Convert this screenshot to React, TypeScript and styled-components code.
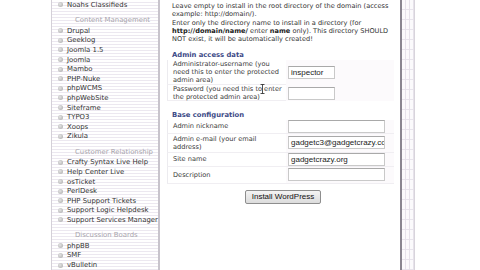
import React from 'react';
import styled, { createGlobalStyle } from 'styled-components';

const GlobalStyle = createGlobalStyle`
  html, body {
    margin: 0;
    padding: 0;
    background: #ffffff;
    overflow: hidden;
  }
  body {
    width: 480px;
    height: 270px;
  }
`;

const Page = styled.div`
  display: flex;
  width: 480px;
  height: 270px;
  background: #ffffff;
  font-family: 'DejaVu Sans', Verdana, sans-serif;
  color: #333333;
  overflow: hidden;
`;

const LeftGap = styled.div`
  width: 51px;
  flex-shrink: 0;
`;

const Sidebar = styled.div`
  width: 106px;
  flex-shrink: 0;
  border-left: 1px solid #d4d0d8;
  border-right: 2px solid #c8c4cc;
  background: repeating-linear-gradient(
    to bottom,
    #ffffff 0px,
    #ffffff 2px,
    #ece8f0 2px,
    #ece8f0 3px
  );
  display: flex;
  flex-direction: column;
`;

const Item = styled.div`
  display: flex;
  align-items: center;
  gap: 4px;
  height: 9.7px;
  padding-left: 6px;
  font-size: 6.9px;
  color: #333333;
  white-space: nowrap;
`;

const Bullet = styled.span`
  width: 5px;
  height: 5px;
  border-radius: 50%;
  background: radial-gradient(circle at 40% 40%, #e4e4e4 0%, #b4b4b4 80%);
  flex-shrink: 0;
`;

const GroupTitle = styled.div`
  padding-top: 6.6px;
  padding-left: 23px;
  height: 9.7px;
  line-height: 9.7px;
  font-size: 6.9px;
  color: #a8a4ac;
  white-space: nowrap;
`;

const Main = styled.div`
  position: relative;
  width: 240px;
  flex-shrink: 0;
  padding: 2px 6px 0 7px;
  box-sizing: border-box;
`;

const Intro = styled.div`
  padding-left: 5px;
  font-size: 6.6px;
  line-height: 8.3px;
  color: #333333;
  b {
    font-weight: bold;
    color: #222222;
  }
`;

const Section = styled.div<{ $top: number }>`
  padding: ${({ $top }) => $top}px 0 0 5px;
  height: 10px;
  line-height: 10px;
  font-size: 6.8px;
  font-weight: bold;
  color: #3c4a86;
`;

const Row = styled.div<{ $h: number }>`
  display: grid;
  grid-template-columns: 118px 1fr;
  height: ${({ $h }) => $h}px;
  box-sizing: border-box;
  border-left: 1px solid #ecebef;
  border-bottom: 1px solid #f0eef2;
`;

const Label = styled.div`
  padding: 0 1px 0 5px;
  display: flex;
  align-items: center;
  font-size: 6.6px;
  line-height: 8.2px;
  color: #3a3a3a;
`;

const Field = styled.div`
  display: flex;
  align-items: center;
  padding-left: 2px;
  background: #fcfafc;
`;

const Input = styled.div<{ $w: number }>`
  width: ${({ $w }) => $w}px;
  height: 13px;
  box-sizing: border-box;
  border: 1px solid #c9c9c9;
  border-top-color: #a9a9a9;
  background: #ffffff;
  font-family: 'Liberation Sans', Arial, sans-serif;
  font-size: 8px;
  line-height: 11px;
  padding-left: 2px;
  color: #222222;
  white-space: nowrap;
  overflow: hidden;
`;

const ButtonRow = styled.div`
  display: flex;
  justify-content: center;
  padding-top: 6px;
  padding-left: 5px;
`;

const Button = styled.div`
  width: 76px;
  height: 14px;
  box-sizing: border-box;
  border: 1px solid #8e8e8e;
  border-radius: 2px;
  background: linear-gradient(to bottom, #f4f4f4, #dcdcdc);
  font-family: 'Liberation Sans', Arial, sans-serif;
  font-size: 8px;
  line-height: 12px;
  text-align: center;
  color: #111111;
`;

const Cursor = styled.svg`
  position: absolute;
  left: 100px;
  top: 84px;
`;

const Rail = styled.div`
  width: 12px;
  flex-shrink: 0;
  border-left: 2px solid #8a8690;
  border-right: 1px solid #d8d4dc;
  background:
    repeating-linear-gradient(to right, transparent 0px, transparent 3px, #e6e2ea 3px, #e6e2ea 4px),
    repeating-linear-gradient(to bottom, #fbfafc 0px, #fbfafc 9px, #e8e4ec 9px, #e8e4ec 10px);
`;

const groups: { title?: string; items: string[] }[] = [
  { items: ['Noahs Classifieds'] },
  {
    title: 'Content Management',
    items: ['Drupal', 'Geeklog', 'Joomla 1.5', 'Joomla', 'Mambo', 'PHP-Nuke', 'phpWCMS', 'phpWebSite', 'Siteframe', 'TYPO3', 'Xoops', 'Zikula'],
  },
  {
    title: 'Customer Relationship',
    items: ['Crafty Syntax Live Help', 'Help Center Live', 'osTicket', 'PerlDesk', 'PHP Support Tickets', 'Support Logic Helpdesk', 'Support Services Manager'],
  },
  { title: 'Discussion Boards', items: ['phpBB', 'SMF', 'vBulletin'] },
];

export default function App() {
  return (
    <Page>
      <GlobalStyle />
      <LeftGap />
      <Sidebar>
        {groups.map((g, gi) => (
          <React.Fragment key={gi}>
            {g.title && <GroupTitle>{g.title}</GroupTitle>}
            {g.items.map((name) => (
              <Item key={name}>
                <Bullet />
                {name}
              </Item>
            ))}
          </React.Fragment>
        ))}
      </Sidebar>
      <Main>
        <Intro>
          Leave empty to install in the root directory of the domain (access example: http://domain/).
          <br />
          Enter only the directory name to install in a directory (for <b>http://domain/name/</b> enter <b>name</b>{' '}
          only). This directory SHOULD NOT exist, it will be automatically created!
        </Intro>
        <Section $top={6.5}>Admin access data</Section>
        <Row $h={25}>
          <Label>Administrator-username (you need this to enter the protected admin area)</Label>
          <Field>
            <Input $w={47}>inspector</Input>
          </Field>
        </Row>
        <Row $h={16}>
          <Label>Password (you need this to enter the protected admin area)</Label>
          <Field>
            <Input $w={47} />
          </Field>
        </Row>
        <Section $top={9}>Base configuration</Section>
        <Row $h={14}>
          <Label>Admin nickname</Label>
          <Field>
            <Input $w={97} />
          </Field>
        </Row>
        <Row $h={19}>
          <Label>Admin e-mail (your email address)</Label>
          <Field>
            <Input $w={97}>gadgetc3@gadgetcrazy.com</Input>
          </Field>
        </Row>
        <Row $h={14}>
          <Label>Site name</Label>
          <Field>
            <Input $w={97}>gadgetcrazy.org</Input>
          </Field>
        </Row>
        <Row $h={17}>
          <Label>Description</Label>
          <Field>
            <Input $w={97} />
          </Field>
        </Row>
        <ButtonRow>
          <Button>Install WordPress</Button>
        </ButtonRow>
        <Cursor width="5" height="10" viewBox="0 0 5 10">
          <path d="M0.5 0.5h4M2.5 0.5v9M0.5 9.5h4" stroke="#222" strokeWidth="0.8" fill="none" />
        </Cursor>
      </Main>
      <Rail />
    </Page>
  );
}
